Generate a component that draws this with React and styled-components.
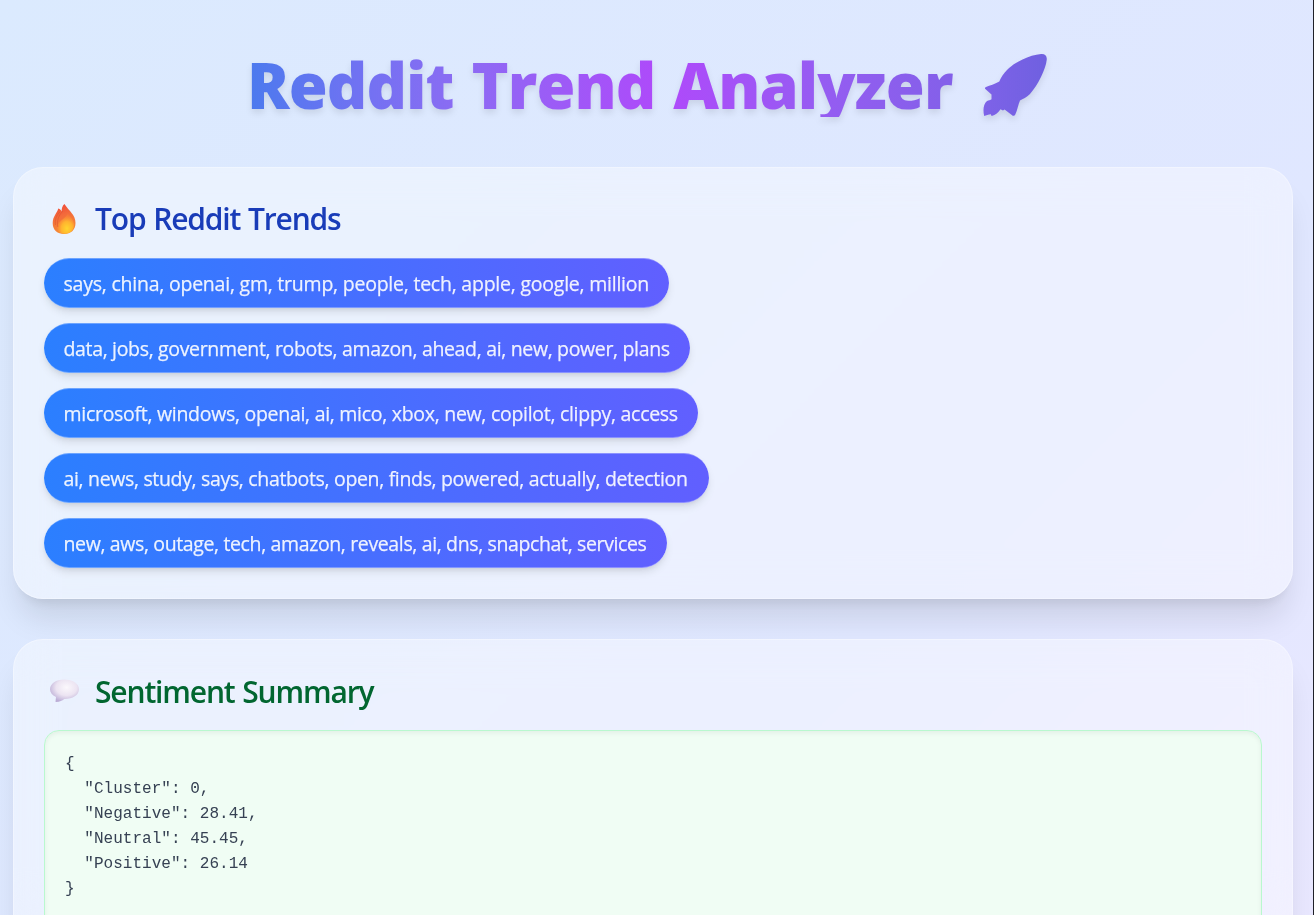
import React from "react";
import styled, { createGlobalStyle } from "styled-components";

const GlobalStyle = createGlobalStyle`
  *, *::before, *::after { box-sizing: border-box; }
  body { margin: 0; overflow: hidden; }
`;

const Page = styled.div`
  height: 915px;
  overflow: hidden;
  padding: 53px 20px 0 13px;
  border-right: 1px solid #1f2028;
  background: linear-gradient(135deg, #dbeafe 0%, #e0e7ff 50%, #f3e8ff 100%);
  background-size: 100% 1700px;
  font-family: "Open Sans", "Noto Sans", sans-serif;
`;

const Title = styled.h1`
  display: flex;
  align-items: flex-start;
  height: 64px;
  margin: 0 0 50px;
  padding-left: 234px;
  font-size: 63px;
  font-weight: 800;
  line-height: 64px;
  letter-spacing: -0.9px;
  word-spacing: 2.4px;
  white-space: pre;
  filter: drop-shadow(0 4px 3px rgba(0, 0, 0, 0.09));
`;

const TitleText = styled.span`
  width: 736px;
  height: 64px;
  flex: none;
  color: transparent;
  background: linear-gradient(90deg, #4b7aee 0, #7072f2 110px, #8b6cf3 210px, #ad4bfa 405px, #ad4bfa 430px, #965cf2 570px, #7f61e7 736px);
  background-clip: text;
  -webkit-background-clip: text;
`;

const Rocket = styled.svg`
  width: 66px;
  height: 64px;
  flex: none;
`;

const Card = styled.section`
  height: ${(p) => p.$height}px;
  margin-bottom: 40px;
  padding: 31px 30px;
  border: 1px solid rgba(255, 255, 255, 0.3);
  border-radius: 30px;
  background: rgba(255, 255, 255, 0.4);
  backdrop-filter: blur(20px);
  box-shadow: 0 25px 31px -6px rgba(0, 0, 0, 0.1), 0 10px 13px -8px rgba(0, 0, 0, 0.1);
`;

const Heading = styled.h2`
  display: flex;
  align-items: center;
  gap: 11px;
  height: 40px;
  margin: 0 0 19px;
  color: ${(p) => p.$color};
  font-size: 30px;
  font-weight: 600;
  line-height: 40px;
  letter-spacing: -1.15px;
  word-spacing: 1px;
  white-space: nowrap;
`;

const HeadingText = styled.span`
  padding-top: ${(p) => p.$drop || 0}px;
`;

const HeadingIcon = styled.svg`
  width: 40px;
  height: 40px;
  flex: none;
`;

const PillList = styled.div`
  display: flex;
  flex-direction: column;
  align-items: flex-start;
  gap: 15px;
`;

const Pill = styled.span`
  width: ${(p) => p.$width}px;
  height: 50px;
  padding: 1px 0 0 19.5px;
  border: 1px solid rgba(255, 255, 255, 0.3);
  border-width: 1px 0;
  border-radius: 25px;
  background: linear-gradient(90deg, #2b7fff, #615fff) border-box;
  box-shadow: 0 5px 8px -1px rgba(0, 0, 0, 0.1), 0 2px 5px -2px rgba(0, 0, 0, 0.1);
  color: rgba(255, 255, 255, 0.9);
  -webkit-text-stroke: 0.25px rgba(255, 255, 255, 0.8);
  font-size: 19.5px;
  line-height: 48px;
  letter-spacing: ${(p) => p.$spacing}px;
  white-space: nowrap;
`;

const CodeBlock = styled.pre`
  height: 240px;
  margin: 0;
  padding: 21px 20px;
  border: 1px solid #b9f8cf;
  border-radius: 15px;
  background: #f0fdf4;
  box-shadow: inset 0 2px 5px rgba(0, 0, 0, 0.06);
  color: #364153;
  font-family: "Liberation Mono", monospace;
  font-size: 16px;
  line-height: 25px;
  letter-spacing: 0.03px;
`;

const trends = [
  { text: "says, china, openai, gm, trump, people, tech, apple, google, million", width: 625, spacing: -0.23 },
  { text: "data, jobs, government, robots, amazon, ahead, ai, new, power, plans", width: 646, spacing: -0.34 },
  { text: "microsoft, windows, openai, ai, mico, xbox, new, copilot, clippy, access", width: 654, spacing: -0.29 },
  { text: "ai, news, study, says, chatbots, open, finds, powered, actually, detection", width: 665, spacing: -0.34 },
  { text: "new, aws, outage, tech, amazon, reveals, ai, dns, snapchat, services", width: 623, spacing: -0.37 },
];

const sentiment = { Cluster: 0, Negative: 28.41, Neutral: 45.45, Positive: 26.14 };

function FlameIcon() {
  return (
    <HeadingIcon viewBox="0 0 40 40">
      <defs>
        <linearGradient id="flameOuter" x1="0" y1="0" x2="0.25" y2="1">
          <stop offset="0" stopColor="#ef4439" />
          <stop offset="0.45" stopColor="#f36b3b" />
          <stop offset="1" stopColor="#f58b35" />
        </linearGradient>
        <radialGradient id="flameInner" cx="0.58" cy="0.75" r="0.75">
          <stop offset="0" stopColor="#ffd52f" />
          <stop offset="0.45" stopColor="#ffb32f" />
          <stop offset="1" stopColor="#fa713b" stopOpacity="0.2" />
        </radialGradient>
      </defs>
      <path d="M20.4 5C18.200 7 17.600 9.500 17.600 12.600C17.200 11.200 16.200 10 14.200 9.600C13.200 14.3 8.7 17.2 8.7 24.2C8.7 31.1 13.6 35 20 35C26.8 35 31.5 31 31.5 24C31.5 15.5 25.300 12.500 20.4 5Z" fill="url(#flameOuter)" />
      <path d="M23.4 14C23.6 19 14 21 13.2 28C12.9 32 16.4 34.7 20.6 34.7C26.5 34.7 30.5 30.8 30 25C29.5 20 26 17.4 23.4 14Z" fill="url(#flameInner)" />
      <path d="M15.8 13C12 17 10.8 21 11.5 26M19 12C14 17 12.8 22 13.8 28" fill="none" stroke="#d9502f" strokeOpacity="0.5" strokeWidth="1" />
    </HeadingIcon>
  );
}

function BubbleIcon() {
  return (
    <HeadingIcon viewBox="0 0 40 40">
      <defs>
        <radialGradient id="bubble" cx="0.57" cy="0.35" r="0.65">
          <stop offset="0" stopColor="#fbf8fc" />
          <stop offset="0.55" stopColor="#ece4f2" />
          <stop offset="1" stopColor="#bcaed6" />
        </radialGradient>
      </defs>
      <path d="M20.3 8.5C28.7 8.5 35 12.6 35 18.2C35 24 28.8 28 20.4 28C18 29.8 15.8 30.8 12.4 31.1C11.5 31.2 11.4 30.5 11.6 29.7L12 25.9C8.3 24.2 6 21.6 6 18.3C6 12.7 12 8.5 20.3 8.5Z" fill="url(#bubble)" />
    </HeadingIcon>
  );
}

export default function App() {
  return (
    <>
      <GlobalStyle />
      <Page>
        <Title>
          <TitleText>Reddit Trend Analyzer</TitleText>
          <Rocket viewBox="0 0 66 64">
            <defs>
              <linearGradient id="rocket" x1="0" y1="0" x2="1" y2="0">
                <stop offset="0" stopColor="#7e62e8" />
                <stop offset="1" stopColor="#6f60e0" />
              </linearGradient>
            </defs>
            <path d="M58 1C62 .6 64.3 3 63.7 7C62.8 16 55 32 47 41C43.500 44.500 40 46 37 47.500C35.200 51.500 34.500 57 32.300 61.500C31.500 63.200 30 63.200 28.800 62L21.600 56.500L20 57.500L17.500 56.200C15.500 59.500 12.500 62 8.700 63C8 62.500 8.300 61.700 7.700 61.300C5.500 61.500 3.200 62.500 1.200 63C-.2 57 .3 51 4 48C5.500 47 7.500 47.200 8.500 46.200V41.500L2.300 36C1.600 35.200 2 34.300 3 34C7 32 11.500 31.500 16.300 28.500C18 24.500 20.500 20.500 24 17C32 9 46 2 58 1Z" fill="url(#rocket)" />
          </Rocket>
        </Title>

        <Card $height={432}>
          <Heading $color="#193cb8">
            <FlameIcon />
            <HeadingText>Top Reddit Trends</HeadingText>
          </Heading>
          <PillList>
            {trends.map((t) => (
              <Pill key={t.text} $width={t.width} $spacing={t.spacing}>{t.text}</Pill>
            ))}
          </PillList>
        </Card>

        <Card $height={340}>
          <Heading $color="#016630">
            <BubbleIcon />
            <HeadingText $drop={2}>Sentiment Summary</HeadingText>
          </Heading>
          <CodeBlock>{JSON.stringify(sentiment, null, 2)}</CodeBlock>
        </Card>
      </Page>
    </>
  );
}
